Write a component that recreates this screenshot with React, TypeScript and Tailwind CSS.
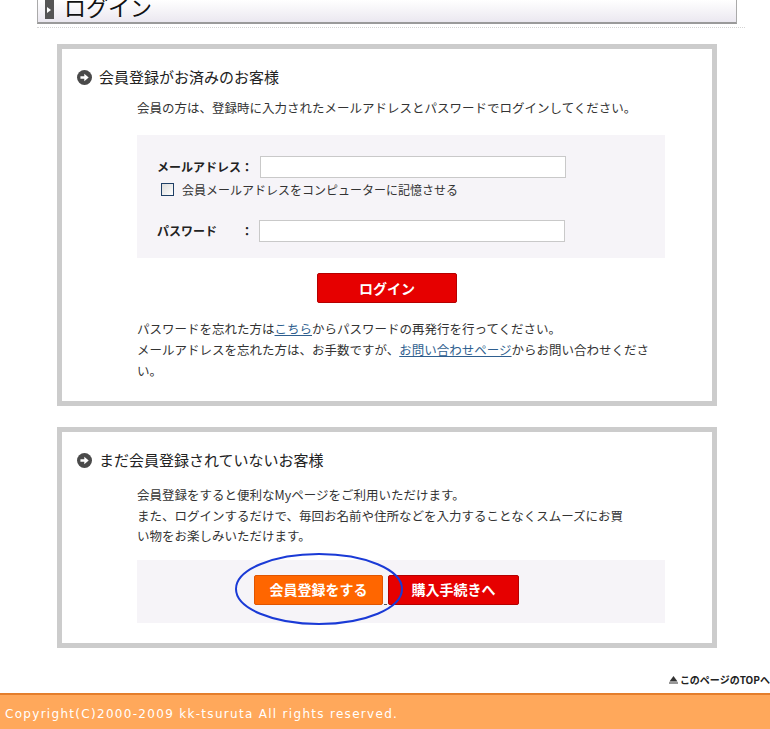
import React from "react";

function CircleArrow() {
  return (
    <svg width="15" height="15" viewBox="0 0 14 14" className="shrink-0">
      <circle cx="7" cy="7" r="7" fill="#4a4a4a" />
      <path d="M3.2 5.9h3.6V3.6L10.9 7 6.8 10.4V8.1H3.2z" fill="#fff" />
    </svg>
  );
}

function Heading({ children }: { children: React.ReactNode }) {
  return (
    <div className="flex items-center h-[20px] gap-[7px] pl-[15px]">
      <CircleArrow />
      <span className="text-[15px] leading-[20px] text-[#222]">{children}</span>
    </div>
  );
}

export default function App() {
  return (
    <div className="w-[770px] min-h-[729px] bg-white flex flex-col font-['Noto_Sans_CJK_JP','Noto_Sans',sans-serif] text-[#333] overflow-hidden">
      <div className="ml-[37px] w-[700px]">
        {/* page title bar */}
        <div className="h-[24px] flex overflow-hidden border-x border-x-[#aaaaaa] border-b-2 border-b-[#9a9a9a] bg-gradient-to-b from-white to-[#ebe8f0]">
          <div className="ml-[7px] w-[9px] h-[19px] bg-[#555] flex items-center pl-[2px]">
            <span className="w-0 h-0 border-y-[3px] border-y-transparent border-l-[4px] border-l-white" />
          </div>
          <span className="ml-[10px] -mt-[9px] text-[22px] leading-[30px] text-[#111]">ログイン</span>
        </div>
        <div className="mt-[3px] w-[708px] border-t border-dotted border-[#d4d4d4]" />

        {/* registered members */}
        <div className="mt-[16px] ml-[20px] w-[660px] border-[5px] border-[#cccccc] pt-[18px] pb-[20px]">
          <Heading>会員登録がお済みのお客様</Heading>
          <p className="mt-[10px] ml-[75px] text-[12.5px] leading-[21px] whitespace-nowrap">
            会員の方は、登録時に入力されたメールアドレスとパスワードでログインしてください。
          </p>
          <div className="mt-[17px] ml-[75px] w-[528px] bg-[#f6f4f8] pt-[21px] pb-[16px] pl-[20px]">
            <div className="flex items-center h-[22px]">
              <span className="w-[84px] text-[12px] font-bold text-[#222] whitespace-nowrap">メールアドレス</span>
              <span className="w-[19px] text-[12px] font-bold text-[#222]">：</span>
              <div className="w-[306px] h-[22px] bg-white border border-[#c9c9c9]" />
            </div>
            <div className="mt-[5px] flex items-center h-[13px] pl-[4px] gap-[8px]">
              <span className="w-[13px] h-[13px] border border-[#1f3f66] bg-gradient-to-br from-[#dcdcdc] to-white" />
              <span className="text-[12px] leading-[13px] whitespace-nowrap">会員メールアドレスをコンピューターに記憶させる</span>
            </div>
            <div className="mt-[24px] flex items-center h-[22px]">
              <span className="w-[84px] text-[12px] font-bold text-[#222]">パスワード</span>
              <span className="w-[18px] text-[12px] font-bold text-[#222]">：</span>
              <div className="w-[306px] h-[22px] bg-white border border-[#c9c9c9]" />
            </div>
          </div>
          <div className="mt-[15px] flex justify-center">
            <button className="w-[140px] h-[30px] bg-[#e60000] border border-[#b50000] rounded-[2px] text-white text-[14px] font-bold">
              ログイン
            </button>
          </div>
          <p className="mt-[15px] ml-[75px] text-[12.5px] leading-[21px] whitespace-nowrap">
            パスワードを忘れた方は<a className="text-[#2f5f8f] underline">こちら</a>からパスワードの再発行を行ってください。
            <br />
            メールアドレスを忘れた方は、お手数ですが、<a className="text-[#2f5f8f] underline">お問い合わせページ</a>からお問い合わせくださ
            <br />
            い。
          </p>
        </div>

        {/* new customers */}
        <div className="mt-[21px] ml-[20px] w-[660px] border-[5px] border-[#cccccc] pt-[18px] pb-[20px]">
          <Heading>まだ会員登録されていないお客様</Heading>
          <p className="mt-[15px] ml-[75px] text-[12.5px] leading-[20.5px] whitespace-nowrap">
            会員登録をすると便利なMyページをご利用いただけます。
            <br />
            また、ログインするだけで、毎回お名前や住所などを入力することなくスムーズにお買
            <br />
            い物をお楽しみいただけます。
          </p>
          <div className="relative mt-[13px] ml-[75px] w-[528px] bg-[#f6f4f8] pt-[15px] pb-[18px] pl-[117px] flex">
            <button className="w-[129px] h-[30px] bg-[#ff6600] border border-[#e05500] rounded-[2px] text-white text-[14px] font-bold">
              会員登録をする
            </button>
            <span className="w-[5px] flex items-end">
              <span className="ml-[1px] w-[3px] h-px bg-[#555]" />
            </span>
            <button className="w-[131px] h-[30px] bg-[#e60000] border border-[#b50000] rounded-[2px] text-white text-[14px] font-bold">
              購入手続きへ
            </button>
            <svg className="absolute left-[98px] -top-[7px]" width="170" height="74" viewBox="0 0 170 74">
              <ellipse cx="84" cy="36" rx="83" ry="35" fill="none" stroke="#1a3ad6" strokeWidth="2" />
            </svg>
          </div>
        </div>
      </div>

      {/* page top link */}
      <div className="mt-[26px] flex justify-end items-center h-[12px] gap-[2px]">
        <svg width="9" height="9" viewBox="0 0 9 9">
          <path d="M4.5 1L8.5 6.5H0.5z" fill="#333" />
          <rect x="0" y="7.5" width="9" height="1" fill="#333" />
        </svg>
        <span className="text-[10px] leading-[12px] font-bold text-[#222] whitespace-nowrap">このページのTOPへ</span>
      </div>

      {/* footer */}
      <div className="mt-[7px] flex-1 border-t-2 border-[#e47e2c] bg-[#ffa85b] pt-[4px] pl-[5px]">
        <span className="font-['DejaVu_Sans',sans-serif] text-[12px] leading-[16px] tracking-[1.3px] text-white whitespace-nowrap">
          Copyright(C)2000-2009 kk-tsuruta All rights reserved.
        </span>
      </div>
    </div>
  );
}
